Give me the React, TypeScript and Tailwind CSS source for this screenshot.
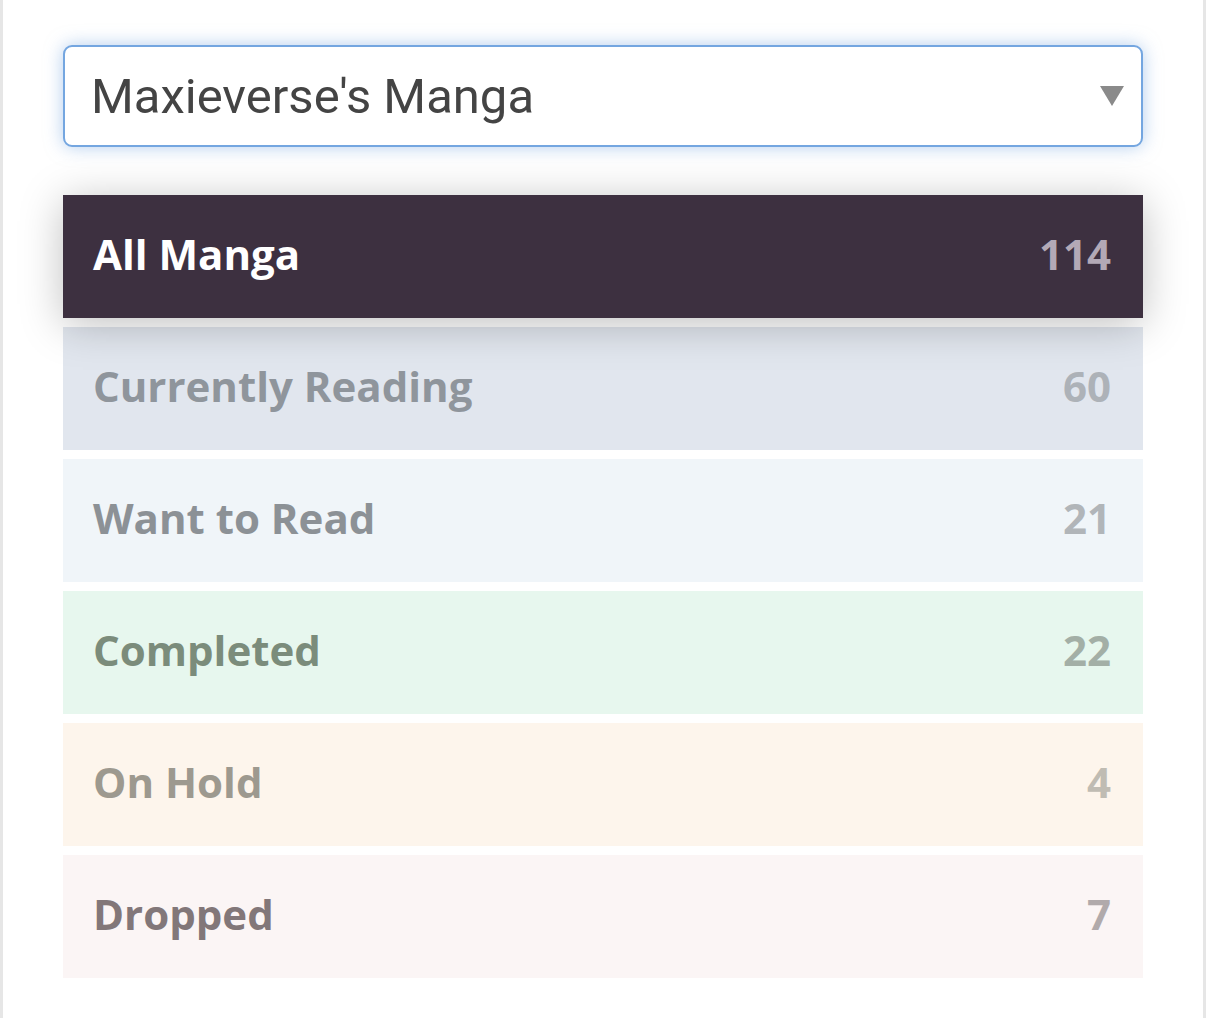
const rows = [
  { label: 'Currently Reading', count: 60, bg: 'bg-[#e1e6ee]', text: 'text-[#8f959c]', num: 'text-[#adb2b8]' },
  { label: 'Want to Read', count: 21, bg: 'bg-[#f0f5f9]', text: 'text-[#8c9196]', num: 'text-[#b1b5b9]' },
  { label: 'Completed', count: 22, bg: 'bg-[#e7f7ee]', text: 'text-[#7b8c7b]', num: 'text-[#a3afa6]' },
  { label: 'On Hold', count: 4, bg: 'bg-[#fdf5ec]', text: 'text-[#9d998f]', num: 'text-[#c0bcb3]' },
  { label: 'Dropped', count: 7, bg: 'bg-[#fbf5f5]', text: 'text-[#827779]', num: 'text-[#b1aaab]' },
]

export default function App() {
  return (
    <div className="h-[1018px] w-[1206px] bg-white border-x-[3px] border-[#e6e6e6] px-[60px] pt-[45px]">
      <div className="relative flex h-[102px] items-center rounded-[9px] border-2 border-[#74a6e0] bg-white pl-[26px] shadow-[0_0_18px_rgba(116,166,224,0.55)]">
        <span className="font-['Roboto',sans-serif] text-[49px] leading-none text-[#444]">Maxieverse's Manga</span>
        <svg className="absolute right-[16px] top-[38px]" width="26" height="22" viewBox="0 0 26 22">
          <path d="M1 1 H25 L13 21 Z" fill="#8a8a8a" />
        </svg>
      </div>

      <div className="mt-[48px] flex flex-col gap-[9px] font-['Open_Sans',sans-serif] font-bold text-[42px] leading-none">
        <div className="relative z-10 flex h-[123px] items-center justify-between bg-[#3d3040] pb-[6px] pl-[30px] pr-[32px] shadow-[0_6px_40px_rgba(0,0,0,0.25)]">
          <span className="text-white">All Manga</span>
          <span className="text-[#b3a9b6]">114</span>
        </div>
        {rows.map((r) => (
          <div key={r.label} className={`flex h-[123px] items-center justify-between pb-[6px] pl-[30px] pr-[32px] ${r.bg}`}>
            <span className={r.text}>{r.label}</span>
            <span className={r.num}>{r.count}</span>
          </div>
        ))}
      </div>
    </div>
  )
}
